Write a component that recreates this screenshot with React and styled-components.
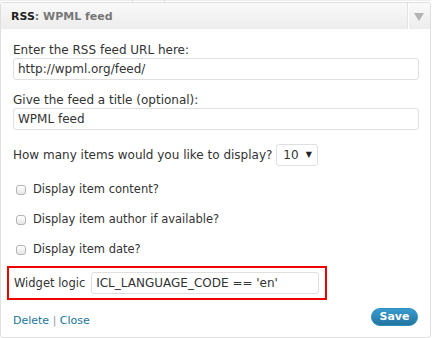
import React from "react";
import styled, { createGlobalStyle } from "styled-components";

const Global = createGlobalStyle`
  html, body { margin: 0; padding: 0; background: #fff; }
  body { font-family: "DejaVu Sans", Verdana, sans-serif; font-size: 12px; color: #333; }
  * { box-sizing: border-box; }
`;

const TopStrip = styled.div`
  height: 2px;
  border-top: 1px solid #eeeeee;
  width: 431px;
  display: flex;
`;

const TopTab = styled.div`
  margin-left: 132px;
  width: 33px;
  height: 2px;
  margin-top: -1px;
  border-left: 1px solid #dcdcdc;
  border-right: 1px solid #dcdcdc;
`;

const Widget = styled.div`
  width: 431px;
  height: 336px;
  border: 1px solid #dfdfdf;
  border-radius: 3px;
  background: #fff;
  display: flex;
  flex-direction: column;
`;

const Header = styled.div`
  height: 26px;
  display: flex;
  align-items: stretch;
  background: linear-gradient(to bottom, #f9f9f9, #ececec);
  border-radius: 2px 2px 0 0;
`;

const Title = styled.h4`
  flex: 1;
  margin: 0;
  padding-left: 10px;
  display: flex;
  align-items: center;
  font: bold 11px "DejaVu Sans", Verdana, sans-serif;
  color: #222;
`;

const TitleIn = styled.span`
  color: #777;
`;

const Toggle = styled.div`
  width: 22px;
  border-left: 1px solid #fdfdfd;
  box-shadow: -1px 0 0 #e2e2e2;
  display: flex;
  align-items: center;
  justify-content: center;
`;

const Arrow = styled.span`
  width: 0;
  height: 0;
  border-left: 5px solid transparent;
  border-right: 5px solid transparent;
  border-top: 8px solid #b3b3b3;
  margin-left: -1px;
  margin-top: 2px;
`;

const Body = styled.div`
  flex: 1;
  padding: 13px 11px 0 12px;
  display: flex;
  flex-direction: column;
`;

const Field = styled.div`
  margin-bottom: ${(p) => p.$mb}px;
`;

const Label = styled.label`
  display: block;
  line-height: 16px;
`;

const TextInput = styled.div`
  height: 22px;
  width: ${(p) => (p.$w ? `${p.$w}px` : "100%")};
  border: 1px solid #dfdfdf;
  border-radius: 3px;
  padding: 0 4px;
  display: flex;
  align-items: center;
  font-size: 12px;
  color: #333;
  background: #fff;
  white-space: nowrap;
`;

const CountRow = styled.div`
  display: flex;
  align-items: center;
  height: 22px;
  line-height: 16px;
  margin-bottom: 15px;
`;

const Select = styled.div`
  margin-left: 4px;
  width: 42px;
  height: 22px;
  border: 1px solid #dfdfdf;
  border-radius: 3px;
  display: flex;
  align-items: center;
  padding-left: 6px;
  gap: 7px;
  background: #fff;
`;

const SelArrow = styled.span`
  font-size: 8px;
  color: #222;
`;

const CheckRow = styled.div`
  display: flex;
  align-items: center;
  height: 16px;
  line-height: 16px;
  font-size: 11.5px;
  margin-bottom: 14px;
`;

const Box = styled.span`
  width: 10px;
  height: 10px;
  margin: 2px 7px 0 3px;
  border: 1px solid #b4b4b4;
  border-radius: 3px;
  background: linear-gradient(to bottom, #ffffff, #e6e6e6);
`;

const LogicBox = styled.div`
  margin: -5px 0 0 -6px;
  width: 320px;
  height: 34px;
  border: 2px solid #ee0000;
  display: flex;
  align-items: center;
  gap: 6px;
  padding: 0 5px;
  font-size: 11.5px;
`;

const Footer = styled.div`
  margin-top: 9px;
  display: flex;
  align-items: center;
  justify-content: space-between;
  padding-right: 1px;
`;

const Links = styled.div`
  font-size: 11px;
  color: #999;
  padding-top: 5px;
`;

const Link = styled.a`
  color: #21759b;
  text-decoration: none;
`;

const Save = styled.button`
  width: 47px;
  height: 18px;
  margin-top: -3px;
  border-radius: 9px;
  border: 1px solid #298cba;
  background: linear-gradient(to bottom, #3a9cd0, #2173a0);
  color: #fff;
  font: bold 11px "DejaVu Sans", Verdana, sans-serif;
  padding: 0;
  display: flex;
  align-items: center;
  justify-content: center;
`;

export default function App() {
  return (
    <>
      <Global />
      <TopStrip>
        <TopTab />
      </TopStrip>
      <Widget>
        <Header>
          <Title>
            RSS<TitleIn>: WPML feed</TitleIn>
          </Title>
          <Toggle>
            <Arrow />
          </Toggle>
        </Header>
        <Body>
          <Field $mb={12}>
            <Label>Enter the RSS feed URL here:</Label>
            <TextInput>http://wpml.org/feed/</TextInput>
          </Field>
          <Field $mb={14}>
            <Label>Give the feed a title (optional):</Label>
            <TextInput>WPML feed</TextInput>
          </Field>
          <CountRow>
            How many items would you like to display?
            <Select>
              10<SelArrow>▼</SelArrow>
            </Select>
          </CountRow>
          <CheckRow>
            <Box />
            Display item content?
          </CheckRow>
          <CheckRow>
            <Box />
            Display item author if available?
          </CheckRow>
          <CheckRow>
            <Box />
            Display item date?
          </CheckRow>
          <LogicBox>
            Widget logic
            <TextInput $w={228}>ICL_LANGUAGE_CODE == 'en'</TextInput>
          </LogicBox>
          <Footer>
            <Links>
              <Link href="#">Delete</Link> | <Link href="#">Close</Link>
            </Links>
            <Save>Save</Save>
          </Footer>
        </Body>
      </Widget>
    </>
  );
}
